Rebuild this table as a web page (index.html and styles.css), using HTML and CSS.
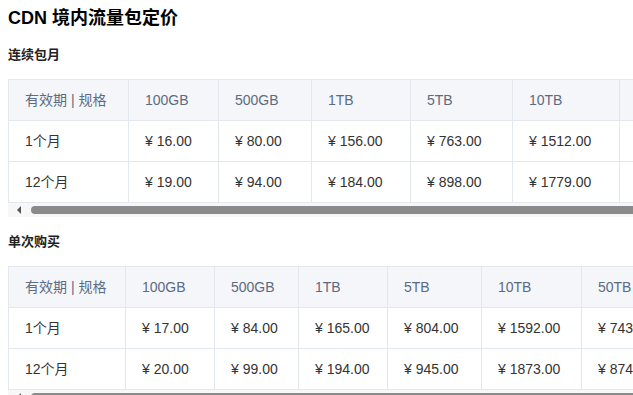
FILE: index.html
```html
<!DOCTYPE html>
<html lang="zh-CN">
<head>
<meta charset="utf-8">
<title>CDN 境内流量包定价</title>
<link rel="stylesheet" href="styles.css">
</head>
<body>
<h1 class="title">CDN 境内流量包定价</h1>

<h2 class="subtitle">连续包月</h2>
<div class="table-wrap">
  <table class="price t1">
    <colgroup><col><col><col><col><col><col><col><col></colgroup>
    <thead>
      <tr><th>有效期 | 规格</th><th>100GB</th><th>500GB</th><th>1TB</th><th>5TB</th><th>10TB</th><th>50TB</th><th>100TB</th></tr>
    </thead>
    <tbody>
      <tr><td>1个月</td><td>¥ 16.00</td><td>¥ 80.00</td><td>¥ 156.00</td><td>¥ 763.00</td><td>¥ 1512.00</td><td>¥ 7095.00</td><td>¥ 13880.00</td></tr>
      <tr><td>12个月</td><td>¥ 19.00</td><td>¥ 94.00</td><td>¥ 184.00</td><td>¥ 898.00</td><td>¥ 1779.00</td><td>¥ 8347.00</td><td>¥ 16330.00</td></tr>
    </tbody>
  </table>
</div>
<div class="scrollbar"><span class="arrow"></span><span class="thumb"></span></div>

<h2 class="subtitle second">单次购买</h2>
<div class="table-wrap">
  <table class="price t2">
    <colgroup><col><col><col><col><col><col><col><col></colgroup>
    <thead>
      <tr><th>有效期 | 规格</th><th>100GB</th><th>500GB</th><th>1TB</th><th>5TB</th><th>10TB</th><th>50TB</th><th>100TB</th></tr>
    </thead>
    <tbody>
      <tr><td>1个月</td><td>¥ 17.00</td><td>¥ 84.00</td><td>¥ 165.00</td><td>¥ 804.00</td><td>¥ 1592.00</td><td>¥ 7430.00</td><td>¥ 14560.00</td></tr>
      <tr><td>12个月</td><td>¥ 20.00</td><td>¥ 99.00</td><td>¥ 194.00</td><td>¥ 945.00</td><td>¥ 1873.00</td><td>¥ 8740.00</td><td>¥ 17130.00</td></tr>
    </tbody>
  </table>
</div>
<div class="scrollbar"><span class="arrow"></span><span class="thumb"></span></div>
</body>
</html>
```
FILE: styles.css
```css
html, body {
  background: #ffffff;
}
body {
  margin: 0;
  padding: 8px 0 0 8px;
  font-family: "Liberation Sans", "Noto Sans CJK SC", sans-serif;
  color: #333333;
  overflow: hidden;
}
.title {
  margin: 0;
  font-size: 18px;
  line-height: 20px;
  font-weight: bold;
  color: #000000;
}
.subtitle {
  margin: 17px 0 14px;
  font-size: 13px;
  line-height: 20px;
  font-weight: bold;
  color: #222222;
}
.subtitle.second {
  margin-top: 15px;
}
.table-wrap {
  overflow: hidden;
  width: 100%;
}
.price {
  border-collapse: collapse;
  table-layout: fixed;
  font-size: 14px;
}
.t1 { width: 835px; }
.t2 { width: 800px; }
.t1 col:nth-child(1) { width: 120px; }
.t1 col:nth-child(2) { width: 90px; }
.t1 col:nth-child(3) { width: 93px; }
.t1 col:nth-child(4) { width: 99px; }
.t1 col:nth-child(5) { width: 102px; }
.t1 col:nth-child(6) { width: 107px; }
.t1 col:nth-child(7) { width: 110px; }
.t1 col:nth-child(8) { width: 114px; }
.t2 col:nth-child(1) { width: 117px; }
.t2 col:nth-child(2) { width: 89px; }
.t2 col:nth-child(3) { width: 84px; }
.t2 col:nth-child(4) { width: 89px; }
.t2 col:nth-child(5) { width: 94px; }
.t2 col:nth-child(6) { width: 100px; }
.t2 col:nth-child(7) { width: 105px; }
.t2 col:nth-child(8) { width: 122px; }
.price th,
.price td {
  border: 1px solid #e3e7ee;
  padding: 10px 16px;
  line-height: 20px;
  text-align: left;
  white-space: nowrap;
  font-weight: normal;
}
.price th {
  background: #f5f6f9;
  color: #5c6b82;
}
.price td {
  color: #333333;
}
.scrollbar {
  display: flex;
  align-items: center;
  height: 14px;
  background: #f7f7f7;
}
.arrow {
  width: 0;
  height: 0;
  margin-left: 9px;
  border-top: 4px solid transparent;
  border-bottom: 4px solid transparent;
  border-right: 4px solid #555555;
}
.thumb {
  flex: 1;
  height: 8px;
  margin-left: 10px;
  background: #8a8a8a;
  border-radius: 4px 0 0 4px;
}
```
